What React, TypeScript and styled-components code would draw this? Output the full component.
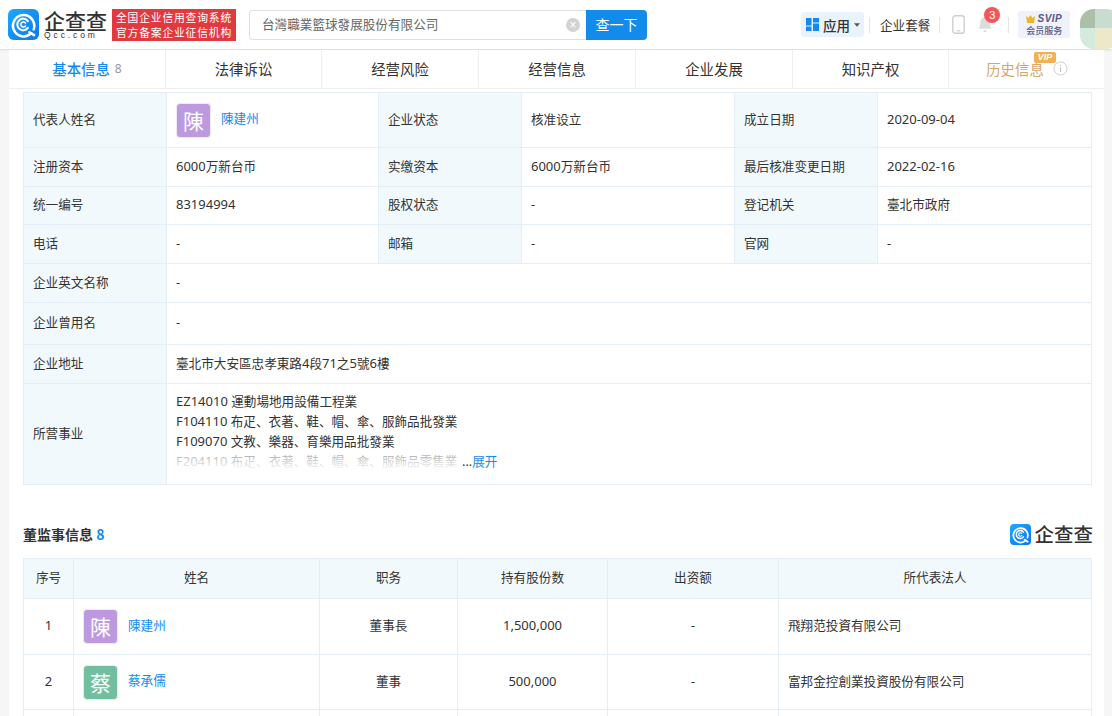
import React from "react";
import styled, { createGlobalStyle } from "styled-components";

const Global = createGlobalStyle`
  html, body { margin: 0; padding: 0; height: 716px; overflow: hidden; background: #f6f6f6; }
  body { font-family: "Noto Sans", "Noto Sans CJK SC", sans-serif; font-size: 12.6px; color: #333; }
  * { box-sizing: border-box; }
`;

const Page = styled.div`width: 1112px; height: 716px; overflow: hidden; display: flex; flex-direction: column;`;
const Header = styled.header`
  height: 50px; flex: none; background: #fff; border-bottom: 1px solid #e2e2e2;
  display: flex; align-items: center; padding-left: 8px; box-shadow: 0 1px 2px rgba(0,0,0,.05);
  & > * { flex: none; }
`;
const LogoWrap = styled.div`display: flex; align-items: center; width: 104px; gap: 5px;`;
const LogoWords = styled.div`display: flex; flex-direction: column; line-height: 1;`;
const LogoCn = styled.span<{ $s?: number }>`font: 500 ${(p) => p.$s ?? 21}px/${(p) => (p.$s ?? 21) + 1}px "Noto Sans CJK SC", sans-serif; color: #333; white-space: nowrap;`;
const LogoEn = styled.span`font: 400 8.5px/9px "Liberation Sans", sans-serif; letter-spacing: 2.9px; color: #333;`;
const RedBadge = styled.div`
  width: 124px; height: 32px; background: #e03a3e; color: #fff; font: 400 10.8px/15px "Noto Sans CJK SC", sans-serif;
  letter-spacing: .8px; text-align: center; padding-top: 1px; white-space: nowrap; margin-right: 13px;
`;
const Search = styled.div`
  width: 337px; height: 30px; border: 1px solid #e0e0e0; border-right: 0; border-radius: 4px 0 0 4px;
  display: flex; align-items: center; justify-content: space-between; padding: 0 6px 2px 12px; color: #666; font-size: 12.6px;
`;
const ClearDot = styled.span`
  width: 14px; height: 14px; margin-top: 2px; border-radius: 50%; background: #d3d3d3; color: #fff; font: 12px/14px "Liberation Sans", sans-serif; text-align: center;
`;
const SearchBtn = styled.button`
  width: 61px; height: 30px; border: 0; background: #128bed; color: #fff; border-radius: 0 4px 4px 0; font: 400 14px "Noto Sans CJK SC", sans-serif; padding: 0 0 2px;
`;
const Tools = styled.div`display: flex; align-items: center; margin-left: 154px; & > * { flex: none; }`;
const AppBtn = styled.div`
  width: 63px; height: 25px; background: #e9f3fd; border-radius: 3px; display: flex; align-items: center; padding-left: 5px; gap: 4px;
  font: 500 13.5px "Noto Sans CJK SC", sans-serif; color: #333;
`;
const Sep = styled.span<{ $ml?: number }>`width: 1px; height: 16px; background: #e4e4e4; margin-left: ${(p) => p.$ml ?? 0}px;`;
const Suite = styled.span`margin: 0 9px 0 10px; padding-bottom: 1px; font-size: 12.6px; color: #333; white-space: nowrap;`;
const PhoneBox = styled.span`margin-left: 12px; display: flex;`;
const BellBox = styled.div`position: relative; width: 16px; height: 18px; margin: 0 15px 0 12px;`;
const Count = styled.span`
  position: absolute; left: 7px; top: -9px; width: 16px; height: 16px; border-radius: 50%; background: #f5555a; color: #fff;
  font: 11px/16px "Liberation Sans", sans-serif; text-align: center;
`;
const Svip = styled.div`
  width: 52px; height: 27px; margin-left: 9px; background: #f0f2fb; border-radius: 2px; display: flex; flex-direction: column; align-items: center;
  font: 500 9px/11px "Noto Sans CJK SC", sans-serif; color: #54598a; padding-top: 2px;
`;
const SvipTop = styled.span`display: flex; align-items: center; gap: 2px; font: italic 700 10px/12px "Liberation Sans", sans-serif; letter-spacing: .5px;`;
const Avatar = styled.div`
  width: 40px; height: 40px; margin: 8px 0 0 10px; border-radius: 14px; overflow: hidden; display: grid; grid-template-columns: 15px 25px; grid-template-rows: 19px 21px;
`;
const Pixel = styled.span<{ $c: string }>`background: ${(p) => p.$c};`;

const Main = styled.main`margin: 0 8px 0 9px; background: #fff; flex: 1; overflow: hidden;`;
const Tabs = styled.nav`height: 39px; display: flex; border-bottom: 1px solid #eee;`;
const Tab = styled.div<{ $w: number; $c?: string; $gap?: number }>`
  position: relative; width: ${(p) => p.$w}px; flex: none; display: flex; align-items: center; justify-content: center; gap: ${(p) => p.$gap ?? 5}px;
  border-right: 1px solid #eee; font-size: 14.4px; padding-bottom: 2px; color: ${(p) => p.$c ?? "#333"};
  &:last-child { border-right: 0; }
`;
const TabNum = styled.span`font-size: 12px; color: #999;`;
const TabStrong = styled.b`font-weight: 500;`;
const VipTag = styled.span`
  position: absolute; left: 85px; top: 2px; width: 22px; height: 11px; background: #f2b052; border-radius: 2px; color: #fff;
  font: italic 700 9px/11px "Liberation Sans", sans-serif; text-align: center;
`;
const InfoTable = styled.table`
  margin: 3px 0 0 14px; width: 1068px; table-layout: fixed; border-collapse: collapse; font-size: 12.6px;
`;
const Th = styled.td`
  background: #f2f9fc; border: 1px solid #e4eef6; padding: 0 9px 1px; color: #333; line-height: 18px;
`;
const Td = styled.td<{ $top?: boolean }>`
  border: 1px solid #e4eef6; padding: 0 9px 1px; color: #333; line-height: 20px; vertical-align: ${(p) => (p.$top ? "top" : "middle")};
`;
const Row = styled.tr<{ $h: number }>`height: ${(p) => p.$h}px;`;
const Person = styled.div`display: flex; align-items: center; gap: 10px; margin-top: 1px;`;
const Face = styled.span<{ $c: string }>`
  width: 35px; height: 35px; flex: none; border-radius: 4px; border: 1px solid #eceaf2; background: ${(p) => p.$c}; color: #fff; text-align: center;
  font: 400 21px/32px "Noto Sans CJK SC", sans-serif;
`;
const Link = styled.a`color: #128bed; font-size: 12.6px; text-decoration: none;`;
const PersonLink = styled(Link)`padding-bottom: 2px;`;
const Latin = styled.span`font-size: 13px; line-height: 1;`;
const Business = styled.div`position: relative; height: 82px; overflow: hidden; margin-top: 8px;`;
const Fade = styled.div`
  position: absolute; left: 0; right: 0; top: 60px; height: 22px; background: linear-gradient(rgba(255,255,255,.55), #fff 85%);
`;
const More = styled.span`position: absolute; left: 286px; top: 60px; color: #333; background: #fff;`;
const SectionHead = styled.div`
  margin: 29px 12px 0 14px; height: 44px; padding-bottom: 4px; display: flex; align-items: center; justify-content: space-between;
`;
const SectionTitle = styled.h3`margin: 0; font: 700 14px "Noto Sans CJK SC", sans-serif; color: #333;`;
const Blue = styled.span`color: #128bed;`;
const SmallLogo = styled.div`display: flex; align-items: center; gap: 3px; margin-right: -1px;`;
const ListTable = styled(InfoTable)`margin-top: 0; text-align: center;`;
const HeadCell = styled(Th)`text-align: center;`;
const Cell = styled(Td)`text-align: center;`;
const LeftCell = styled(Td)`text-align: left;`;

const Mixed = ({ text }: { text: string }) => (
  <>
    {text.split(/([\x21-\x7e ]+)/).map((s, i) =>
      i % 2 ? <Latin key={i}>{s}</Latin> : s
    )}
  </>
);

const Logo = ({ size }: { size: number }) => (
  <svg width={size} height={size} viewBox="0 0 32 32">
    <defs>
      <linearGradient id={`g${size}`} x1="0" y1="0" x2="1" y2="1">
        <stop offset="0" stopColor="#1aa9ff" />
        <stop offset="1" stopColor="#0a78ef" />
      </linearGradient>
    </defs>
    <rect width="32" height="32" rx="6" fill={`url(#g${size})`} />
    <path d="M24 25a11 11 0 1 1 2.5-4" fill="none" stroke="#fff" strokeWidth="2.6" strokeLinecap="round" />
    <path d="M20.5 12.5a6 6 0 1 0 0 7" fill="none" stroke="#fff" strokeWidth="2.2" strokeLinecap="round" />
    <path d="M18 14.5a2.6 2.6 0 1 0 0 3" fill="none" stroke="#fff" strokeWidth="1.6" strokeLinecap="round" />
    <path d="M22 24l5 3" stroke="#fff" strokeWidth="2.6" strokeLinecap="round" />
  </svg>
);

const AppIcon = () => (
  <svg width="13" height="13" viewBox="0 0 13 13">
    <rect x="0" y="0" width="5.5" height="7.5" fill="#128bed" />
    <rect x="0" y="8.5" width="5.5" height="4.5" fill="#128bed" />
    <rect x="7" y="0" width="6" height="4.5" fill="#128bed" />
    <rect x="7" y="5.5" width="6" height="7.5" fill="#128bed" />
  </svg>
);

const Caret = () => (
  <svg width="6" height="4" viewBox="0 0 7 4">
    <path d="M0 0h7L3.5 4z" fill="#555" />
  </svg>
);

const Phone = () => (
  <svg width="13" height="19" viewBox="0 0 13 19">
    <rect x=".8" y=".8" width="11.4" height="17.4" rx="2.5" fill="none" stroke="#cfcfcf" strokeWidth="1.4" />
    <path d="M4.5 15.8h4" stroke="#cfcfcf" strokeWidth="1.2" />
  </svg>
);

const Bell = () => (
  <svg width="16" height="18" viewBox="0 0 18 20" display="block">
    <path d="M9 1.5c-3.4 0-5.2 2.6-5.2 5.6 0 3.4-.9 5.4-2.3 7h15c-1.4-1.6-2.3-3.6-2.3-7 0-3-1.8-5.6-5.2-5.6z" fill="#dcdcdc" />
    <path d="M6.8 16h4.4a2.2 2.2 0 0 1-4.4 0z" fill="#dcdcdc" />
  </svg>
);

const Crown = () => (
  <svg width="9" height="8" viewBox="0 0 9 8">
    <path d="M0 1l2.4 2L4.5 0l2.1 3L9 1 8 8H1z" fill="#f0b429" />
  </svg>
);

const InfoIcon = () => (
  <svg width="15" height="15" viewBox="0 0 15 15">
    <circle cx="7.5" cy="7.5" r="6.5" fill="none" stroke="#d0d0d0" />
    <path d="M7.5 6.5v4.5M7.5 3.8v1.2" stroke="#c4c4c4" strokeWidth="1.2" />
  </svg>
);

const tabs = [
  { t: "法律诉讼", w: 156 },
  { t: "经营风险", w: 157 },
  { t: "经营信息", w: 157 },
  { t: "企业发展", w: 157 },
  { t: "知识产权", w: 156 },
];

const plainRows: [string, string, string, string, string, string, number][] = [
  ["注册资本", "6000万新台币", "实缴资本", "6000万新台币", "最后核准变更日期", "2022-02-16", 39],
  ["统一编号", "83194994", "股权状态", "-", "登记机关", "臺北市政府", 38],
  ["电话", "-", "邮箱", "-", "官网", "-", 39],
];

const wideRows: [string, string, number][] = [
  ["企业英文名称", "-", 39],
  ["企业曾用名", "-", 42],
  ["企业地址", "臺北市大安區忠孝東路4段71之5號6樓", 39],
];

const directors = [
  { n: 1, name: "陳建州", c: "#bd9ae0", role: "董事長", shares: "1,500,000", org: "飛翔范投資有限公司", h: 56 },
  { n: 2, name: "蔡承儒", c: "#72bf9f", role: "董事", shares: "500,000", org: "富邦金控創業投資股份有限公司", h: 55 },
];

export default function App() {
  return (
    <Page>
      <Global />
      <Header>
        <LogoWrap>
          <Logo size={31} />
          <LogoWords>
            <LogoCn>企查查</LogoCn>
            <LogoEn>Qcc.com</LogoEn>
          </LogoWords>
        </LogoWrap>
        <RedBadge>全国企业信用查询系统<br />官方备案企业征信机构</RedBadge>
        <Search>台灣職業籃球發展股份有限公司<ClearDot>×</ClearDot></Search>
        <SearchBtn>查一下</SearchBtn>
        <Tools>
          <AppBtn><AppIcon />应用<Caret /></AppBtn>
          <Sep $ml={5} />
          <Suite>企业套餐</Suite>
          <Sep />
          <PhoneBox><Phone /></PhoneBox>
          <BellBox><Bell /><Count>3</Count></BellBox>
          <Sep />
          <Svip>
            <SvipTop><Crown />SVIP</SvipTop>
            会员服务
          </Svip>
          <Avatar>
            <Pixel $c="#aebfa9" /><Pixel $c="#c8dcd2" /><Pixel $c="#d3ebdd" /><Pixel $c="#eee8cb" />
          </Avatar>
        </Tools>
      </Header>
      <Main>
        <Tabs>
          <Tab $w={157} $c="#128bed"><TabStrong>基本信息</TabStrong><TabNum>8</TabNum></Tab>
          {tabs.map((t) => <Tab key={t.t} $w={t.w}>{t.t}</Tab>)}
          <Tab $w={156} $c="#d6a56d" $gap={9}>历史信息<InfoIcon /><VipTag>VIP</VipTag></Tab>
        </Tabs>
        <InfoTable>
          <colgroup>
            <col width={143} /><col width={212} /><col width={143} /><col width={213} /><col width={143} /><col width={214} />
          </colgroup>
          <tbody>
            <Row $h={55}>
              <Th>代表人姓名</Th>
              <Td><Person><Face $c="#bd9ae0">陳</Face><PersonLink>陳建州</PersonLink></Person></Td>
              <Th>企业状态</Th><Td>核准设立</Td>
              <Th>成立日期</Th><Td><Mixed text="2020-09-04" /></Td>
            </Row>
            {plainRows.map((r) => (
              <Row key={r[0]} $h={r[6]}>
                <Th>{r[0]}</Th><Td><Mixed text={r[1]} /></Td><Th>{r[2]}</Th><Td><Mixed text={r[3]} /></Td><Th>{r[4]}</Th><Td><Mixed text={r[5]} /></Td>
              </Row>
            ))}
            {wideRows.map((r) => (
              <Row key={r[0]} $h={r[2]}>
                <Th>{r[0]}</Th><Td colSpan={5}><Mixed text={r[1]} /></Td>
              </Row>
            ))}
            <Row $h={101}>
              <Th>所营事业</Th>
              <Td colSpan={5} $top>
                <Business>
                  <Mixed text="EZ14010 運動場地用設備工程業" /><br />
                  <Mixed text="F104110 布疋、衣著、鞋、帽、傘、服飾品批發業" /><br />
                  <Mixed text="F109070 文教、樂器、育樂用品批發業" /><br />
                  <Mixed text="F204110 布疋、衣著、鞋、帽、傘、服飾品零售業" />
                  <Fade />
                  <More>...<Link>展开</Link></More>
                </Business>
              </Td>
            </Row>
          </tbody>
        </InfoTable>
        <SectionHead>
          <SectionTitle>董监事信息 <Blue>8</Blue></SectionTitle>
          <SmallLogo><Logo size={21} /><LogoCn $s={19.5}>企查查</LogoCn></SmallLogo>
        </SectionHead>
        <ListTable>
          <colgroup>
            <col width={50} /><col width={246} /><col width={138} /><col width={150} /><col width={171} /><col width={313} />
          </colgroup>
          <tbody>
            <Row $h={40}>
              <HeadCell>序号</HeadCell><HeadCell>姓名</HeadCell><HeadCell>职务</HeadCell>
              <HeadCell>持有股份数</HeadCell><HeadCell>出资额</HeadCell><HeadCell>所代表法人</HeadCell>
            </Row>
            {directors.map((d) => (
              <Row key={d.n} $h={d.h}>
                <Cell><Mixed text={String(d.n)} /></Cell>
                <LeftCell><Person><Face $c={d.c}>{d.name[0]}</Face><PersonLink>{d.name}</PersonLink></Person></LeftCell>
                <Cell>{d.role}</Cell>
                <Cell><Mixed text={d.shares} /></Cell>
                <Cell>-</Cell>
                <LeftCell>{d.org}</LeftCell>
              </Row>
            ))}
            <Row $h={20}><Td /><Td /><Td /><Td /><Td /><Td /></Row>
          </tbody>
        </ListTable>
      </Main>
    </Page>
  );
}
